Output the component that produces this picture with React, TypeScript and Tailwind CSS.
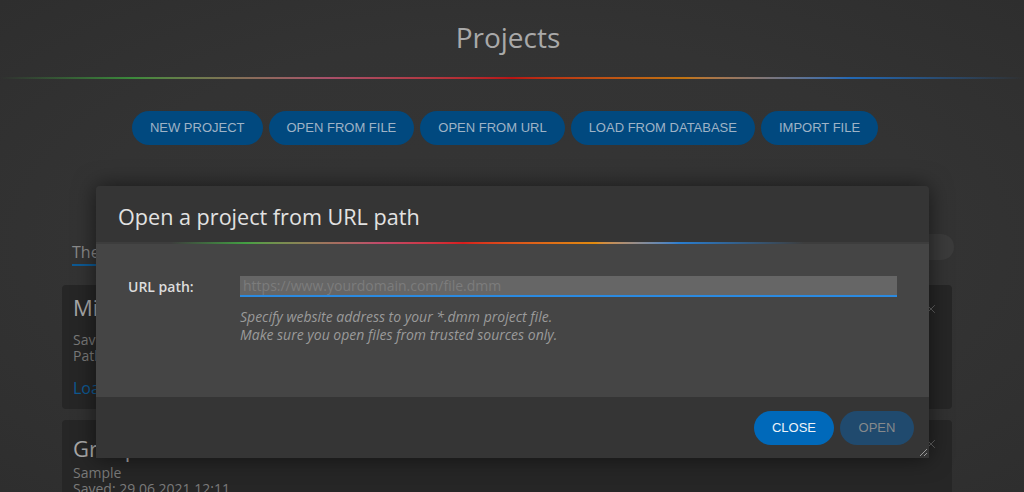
import { X } from 'lucide-react';

const font = "font-['Open_Sans',_'Liberation_Sans',_sans-serif]";
const btnFont = "font-['Liberation_Sans',_Arial,_sans-serif]";

const topButtons = ['New project', 'Open from file', 'Open from URL', 'Load from database', 'Import file'];

// Rainbow rule built from plain two-stop gradient segments.
function TopRainbow() {
  return (
    <div className="flex h-[2px] w-full">
      <div className="w-[13%] bg-gradient-to-r from-transparent to-[#3b8a3b]" />
      <div className="w-[19%] bg-gradient-to-r from-[#3b8a3b] to-[#a8506a]" />
      <div className="w-[18%] bg-gradient-to-r from-[#a8506a] to-[#b81414]" />
      <div className="w-[17%] bg-gradient-to-r from-[#b81414] to-[#c07412]" />
      <div className="w-[16%] bg-gradient-to-r from-[#c07412] to-[#2268b4]" />
      <div className="w-[17%] bg-gradient-to-r from-[#2268b4] to-transparent" />
    </div>
  );
}

function ModalRainbow() {
  return (
    <div className="flex h-[2px] w-full bg-[#3d3d3d]">
      <div className="w-[9%]" />
      <div className="w-[9%] bg-gradient-to-r from-transparent to-[#43a043]" />
      <div className="w-[16%] bg-gradient-to-r from-[#43a043] to-[#c04a6a]" />
      <div className="w-[10%] bg-gradient-to-r from-[#c04a6a] to-[#d81c1c]" />
      <div className="w-[16%] bg-gradient-to-r from-[#d81c1c] to-[#e08c10]" />
      <div className="w-[10%] bg-gradient-to-r from-[#e08c10] to-[#2a7ed0]" />
      <div className="w-[15%] bg-gradient-to-r from-[#2a7ed0] to-transparent" />
    </div>
  );
}

function ProjectCard({
  title,
  lines,
  link,
  top,
  gap,
}: {
  title: string;
  lines: string[];
  link?: string;
  top: string;
  gap: string;
}) {
  return (
    <div className={`relative rounded-[4px] bg-[#262626] px-[11px] ${top}`}>
      <div className="text-[22px] leading-[34px] text-[#a8a8a8]">{title}</div>
      <div className={`text-[14px] leading-[16px] text-[#7a7a7a] ${gap}`}>
        {lines.map((l) => (
          <div key={l}>{l}</div>
        ))}
      </div>
      {link && <div className="mt-[14px] text-[16px] leading-[20px] text-[#0d5a94]">{link}</div>}
      <X className="absolute right-[14px] top-[17px] text-[#6a6a6a]" size={14} strokeWidth={1.5} />
    </div>
  );
}

export default function App() {
  return (
    <div
      className={`relative h-[492px] w-[1024px] overflow-hidden bg-[radial-gradient(ellipse_at_center,#353535_0%,#333333_60%,#2e2e2e_100%)] ${font}`}
    >
      {/* page behind the dialog */}
      <div className="pt-[18px]">
        <h1 className="pr-[8px] text-center text-[28px] leading-[38px] text-[#a9a9a9]">Projects</h1>
        <div className="mt-[21px]">
          <TopRainbow />
        </div>
        <div className="mt-[32px] flex justify-center gap-[6px] pr-[14px]">
          {topButtons.map((b) => (
            <button
              key={b}
              className={`h-[34px] rounded-full bg-[#01497f] px-[18px] text-[13px] uppercase text-[#9fb3c6] ${btnFont}`}
            >
              {b}
            </button>
          ))}
        </div>

        <div className="ml-[62px] mr-[72px] mt-[97px]">
          <div className="flex items-center justify-between">
            <div className="ml-[10px] border-b-2 border-[#0d5a94] pb-[2px] text-[16px] leading-[20px] text-[#8a8a8a]">
              The last projects
            </div>
            <div className="mr-[-2px] mt-[-14px] h-[26px] w-[44px] rounded-full bg-[#3b3b3b]" />
          </div>
          <div className="mt-[19px] flex flex-col gap-[11px]">
            <ProjectCard
              title="Mini project"
              lines={['Saved: 29.06.2021 12:15', 'Path: /projects/mini.dmm']}
              link="Load"
              top="pt-[5px] pb-[11px]"
              gap="mt-[8px]"
            />
            <ProjectCard
              title="Groups"
              lines={['Sample', 'Saved: 29.06.2021 12:11']}
              top="pt-[11px] pb-[11px]"
              gap="mt-0"
            />
          </div>
        </div>
      </div>

      {/* dialog */}
      <div className="absolute left-[96px] top-[186px] flex w-[833px] flex-col rounded-t-[4px] shadow-[0_0_22px_rgba(0,0,0,0.55)]">
        <div className="h-[56px] rounded-t-[4px] bg-[#353535] pl-[22px] pt-[16px]">
          <h2 className="text-[21.6px] leading-[30px] text-[#e2e2e2]">Open a project from URL path</h2>
        </div>
        <ModalRainbow />
        <div className="h-[153px] bg-[#454545] pl-[32px] pr-[32px] pt-[32px]">
          <div className="flex items-center">
            <label className="w-[112px] text-[14px] font-semibold text-[#dcdcdc]">URL path:</label>
            <input
              className="h-[21px] flex-1 border-b-2 border-[#2b8ae0] bg-[#666666] px-[3px] text-[14px] text-[#ddd] outline-none placeholder:text-[#7c7c7c]"
              placeholder="https://www.yourdomain.com/file.dmm"
            />
          </div>
          <div className="ml-[112px] mt-[11px] text-[14px] italic leading-[18px] text-[#9a9a9a]">
            <div>Specify website address to your *.dmm project file.</div>
            <div>Make sure you open files from trusted sources only.</div>
          </div>
        </div>
        <div className="relative flex h-[61px] items-center justify-end gap-[6px] bg-[#353535] pr-[15px]">
          <button className={`h-[34px] w-[80px] rounded-full bg-[#0069ba] text-[13px] text-[#eef3f8] ${btnFont}`}>
            CLOSE
          </button>
          <button className={`h-[34px] w-[74px] rounded-full bg-[#204a6e] text-[13px] text-[#86898c] ${btnFont}`}>
            OPEN
          </button>
          <svg className="absolute bottom-[1px] right-[1px]" width="10" height="10" viewBox="0 0 10 10">
            <path d="M9 2 L2 9 M9 6 L6 9" stroke="#9a9a9a" strokeWidth="1" />
          </svg>
        </div>
      </div>
    </div>
  );
}
